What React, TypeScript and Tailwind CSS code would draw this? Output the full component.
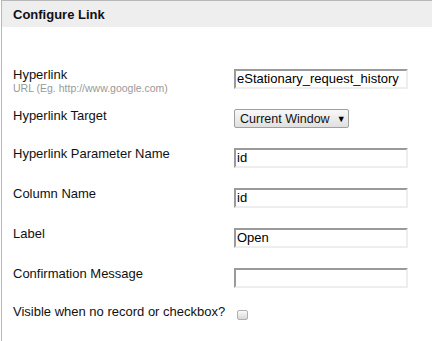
import React from 'react';

const TextBox = ({ value }: { value?: string }) => (
  <div className="w-[174px] h-[20px] border-2 border-t-[#9a9a9a] border-l-[#9a9a9a] border-b-[#eeeeee] border-r-[#eeeeee] bg-white pl-[1px] text-[13px] leading-[16px] text-black whitespace-nowrap overflow-hidden">
    {value}
  </div>
);

const Row = ({ label, sub, height, children }: { label: string; sub?: string; height: string; children: React.ReactNode }) => (
  <div className={`flex items-start ${height}`}>
    <div className="w-[232px] shrink-0 pl-[11px] text-[13px] leading-[15px] text-[#111] whitespace-nowrap">
      <div>{label}</div>
      {sub && <div className="text-[10.5px] leading-[11px] text-[#999] mt-[1px]">{sub}</div>}
    </div>
    <div className="pt-[2px]">{children}</div>
  </div>
);

const App = () => {
  return (
    <div className="w-[432px] h-[341px] bg-white font-['Liberation_Sans',Arial,sans-serif] overflow-hidden">
      <div className="h-full ml-[1px] border-t border-l border-[#b8b8b8]">
        <div className="h-[26px] bg-[#eeeeee] pl-[11px] pt-[6px] text-[13px] leading-[15px] font-bold text-[#111]">
          Configure Link
        </div>

        <div className="pt-[40px]">
          <Row label="Hyperlink" sub="URL (Eg. http://www.google.com)" height="h-[41px]">
            <TextBox value="eStationary_request_history" />
          </Row>

          <Row label="Hyperlink Target" height="h-[38px]">
            <div className="w-[115px] h-[19px] -mt-[1px] flex items-center gap-[7px] pl-[5px] border border-[#a0a0a0] rounded-[2px] bg-gradient-to-b from-[#f8f8f8] to-[#e0e0e0] text-[12.5px] leading-[14px] text-[#111] whitespace-nowrap">
              <span>Current Window</span>
              <span className="text-[9px] text-black">▼</span>
            </div>
          </Row>

          <Row label="Hyperlink Parameter Name" height="h-[40px]">
            <TextBox value="id" />
          </Row>

          <Row label="Column Name" height="h-[40px]">
            <TextBox value="id" />
          </Row>

          <Row label="Label" height="h-[40px]">
            <TextBox value="Open" />
          </Row>

          <Row label="Confirmation Message" height="h-[38px]">
            <TextBox />
          </Row>

          <Row label="Visible when no record or checkbox?" height="h-[30px]">
            <div className="ml-[3px] mt-[4px] w-[11px] h-[10px] rounded-[2px] border border-[#b0b0b0] bg-gradient-to-b from-[#fafafa] to-[#d8d8d8]" />
          </Row>
        </div>
      </div>
    </div>
  );
};

export default App;
